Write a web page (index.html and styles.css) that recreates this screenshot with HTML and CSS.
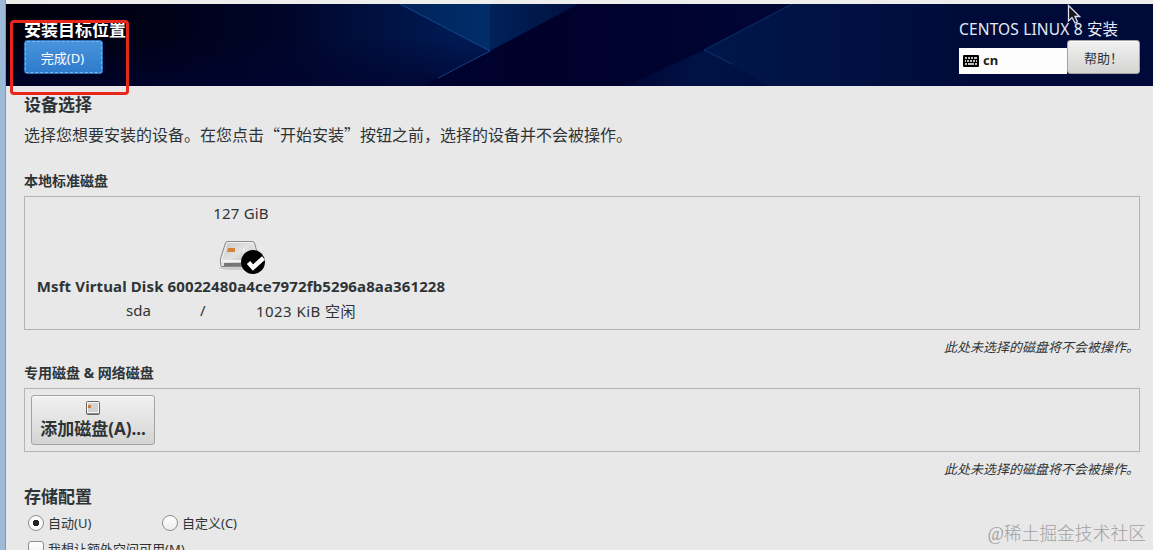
FILE: index.html
```html
<!DOCTYPE html>
<html lang="zh-CN">
<head>
    <meta charset="UTF-8">
    <meta name="viewport" content="width=device-width, initial-scale=1.0">
    <title>安装目标位置</title>
    <link rel="stylesheet" href="styles.css">
</head>
<body>
    <div class="window">
        <header>
            <svg class="banner" viewBox="0 0 1147 82" preserveAspectRatio="none">
                <defs>
                    <linearGradient id="base">
                        <stop offset="0" stop-color="#00000a"/>
                        <stop offset="0.13" stop-color="#000017"/>
                        <stop offset="0.25" stop-color="#00062b"/>
                        <stop offset="0.4" stop-color="#001b56"/>
                        <stop offset="0.48" stop-color="#00164a"/>
                        <stop offset="0.56" stop-color="#00042a"/>
                        <stop offset="1" stop-color="#000a38"/>
                    </linearGradient>
                    <linearGradient id="shade" x2="0" y2="1">
                        <stop offset="0.4" stop-color="#00042f" stop-opacity="0"/>
                        <stop offset="1" stop-color="#00042f" stop-opacity="0.8"/>
                    </linearGradient>
                    <linearGradient id="wedge">
                        <stop offset="0" stop-color="#002358"/>
                        <stop offset="1" stop-color="#002d6b"/>
                    </linearGradient>
                    <linearGradient id="wedgeRight">
                        <stop offset="0" stop-color="#002258"/>
                        <stop offset="1" stop-color="#00103f"/>
                    </linearGradient>
                    <linearGradient id="dark">
                        <stop offset="0" stop-color="#000330"/>
                        <stop offset="0.3" stop-color="#00002a"/>
                        <stop offset="1" stop-color="#000635"/>
                    </linearGradient>
                    <linearGradient id="glow">
                        <stop offset="0" stop-color="#00164a"/>
                        <stop offset="0.35" stop-color="#001041"/>
                        <stop offset="0.6" stop-color="#000a38"/>
                        <stop offset="1" stop-color="#000a38"/>
                    </linearGradient>
                    <linearGradient id="glowLow">
                        <stop offset="0" stop-color="#000533"/>
                        <stop offset="0.5" stop-color="#001245"/>
                        <stop offset="1" stop-color="#000e40"/>
                    </linearGradient>
                </defs>
                <rect width="1147" height="82" fill="url(#base)"/>
                <rect width="484" height="82" fill="url(#shade)"/>
                <path d="M394 0H484V47z" fill="url(#wedge)"/>
                <path d="M484 0H572L484 47z" fill="url(#wedgeRight)"/>
                <path d="M572 0H786L698 46L620 82H415L484 47z" fill="url(#dark)"/>
                <path d="M786 0H1147V82H762L698 46z" fill="url(#glow)"/>
                <path d="M698 46L762 82H620z" fill="url(#glowLow)"/>
                <path d="M394 0L484 47L432 74" fill="none" stroke="#1855a0" stroke-width="1" opacity="0.75"/>
                <path d="M786 0L698 46L726 60" fill="none" stroke="#1552a0" stroke-width="1" opacity="0.5"/>
            </svg>
            <div class="header-left">
                <h1>安装目标位置</h1>
                <button class="btn btn-done">完成(D)</button>
            </div>
            <div class="header-right">
                <div class="product">CENTOS LINUX 8 安装</div>
                <div class="header-tools">
                    <div class="layout-indicator">
                        <svg width="16" height="12" viewBox="0 0 16 12">
                            <rect width="16" height="12" rx="1" fill="#000"/>
                            <path d="M2 3h2M5 3h2M8 3h2M11 3h3M2 6h1M4 6h2M7 6h2M10 6h2M13 6h1M2 9h2M5 9h6M12 9h2" stroke="#fff" stroke-width="1.6"/>
                        </svg>
                        <span>cn</span>
                    </div>
                    <button class="btn btn-help">帮助！</button>
                </div>
            </div>
        </header>

        <main>
            <h2>设备选择</h2>
            <p class="description">选择您想要安装的设备。在您点击“开始安装”按钮之前，选择的设备并不会被操作。</p>

            <h3 class="local">本地标准磁盘</h3>
            <div class="disk-box">
                <div class="disk">
                    <span class="disk-size">127 GiB</span>
                    <svg class="disk-icon" width="50" height="40" viewBox="0 0 50 40">
                        <defs>
                            <linearGradient id="metal" x2="1" y2="1">
                                <stop offset="0" stop-color="#c4c4c4"/>
                                <stop offset="0.45" stop-color="#e2e2e2"/>
                                <stop offset="1" stop-color="#aaa"/>
                            </linearGradient>
                        </defs>
                        <ellipse cx="23" cy="31" rx="20" ry="2" fill="#bbb" opacity="0.6"/>
                        <path d="M11 4.500H36Q38 4.500 38.500 6L43 22V28Q43 29.500 41 29.500H6Q4.500 29.500 4.500 27.500V21.500L9.500 6Q10 4.500 11 4.500z" fill="url(#metal)" stroke="#8a8a8a"/>
                        <path d="M11 5.500H36.500L42 23.500H5.500z" fill="none" stroke="#f2f2f2"/>
                        <path d="M5 24.500H42" stroke="#f4f4f4" stroke-width="1"/>
                        <path d="M8 27.500H40" stroke="#777" stroke-width="3"/>
                        <path d="M12 11h7v4h-8z" fill="#d58337"/>
                        <path d="M28 11v8M31 13v8" stroke="#f5f5f5"/>
                        <circle cx="37" cy="25" r="12" fill="#000"/>
                        <path d="M32.500 25.500L37 30.500L47.500 21" fill="none" stroke="#fff" stroke-width="4.500"/>
                    </svg>
                    <strong class="disk-name">Msft Virtual Disk 60022480a4ce7972fb5296a8aa361228</strong>
                    <div class="disk-info">
                        <span>sda</span>
                        <span>/</span>
                        <span class="disk-free">1023 KiB 空闲</span>
                    </div>
                </div>
            </div>
            <p class="note">此处未选择的磁盘将不会被操作。</p>

            <h3>专用磁盘 &amp; 网络磁盘</h3>
            <div class="network-box">
                <button class="btn btn-add">
                    <svg width="14" height="14" viewBox="0 0 14 14">
                        <rect x="0.500" y="0.500" width="13" height="13" rx="1" fill="#f8f8f8" stroke="#666"/>
                        <rect x="2" y="2" width="10" height="9" fill="#d2d2d2"/>
                        <rect x="2" y="4" width="3" height="3" fill="#cf7c38"/>
                        <path d="M1 12.500h12" stroke="#888"/>
                    </svg>
                    <span>添加磁盘(A)...</span>
                </button>
            </div>
            <p class="note">此处未选择的磁盘将不会被操作。</p>

            <h2 class="storage">存储配置</h2>
            <div class="options">
                <label><span class="radio checked"></span>自动(U)</label>
                <label><span class="radio"></span>自定义(C)</label>
            </div>
            <label class="reclaim"><span class="checkbox"></span>我想让额外空间可用(M)</label>
        </main>
    </div>

    <div class="highlight"></div>
    <svg class="cursor" width="14" height="21" viewBox="0 0 14 21">
        <path d="M1.500 1.500V17L5 13.500L8 19L10.500 18L8 12.500H12.500z" fill="#15151c" stroke="#dde" stroke-width="1.3"/>
    </svg>
    <div class="watermark">@稀土掘金技术社区</div>
</body>
</html>
```
FILE: styles.css
```css
* {
    box-sizing: border-box;
}
body {
    margin: 0;
    height: 550px;
    padding: 4px 0 0 6px;
    overflow: hidden;
    position: relative;
    background: linear-gradient(to right, #9dbbd8 5px, #8798a8 5px, #8798a8 6px, #eeeeec 6px);
    font-family: "Noto Sans", "Noto Sans CJK SC", sans-serif;
    color: #2e3436;
}
h1, h2, h3, p {
    margin: 0;
}
.window {
    height: 546px;
    overflow: hidden;
    background: #e8e8e8;
}
header {
    position: relative;
    height: 82px;
    padding: 15px 13px 0 18px;
    display: flex;
    justify-content: space-between;
    color: white;
}
.banner {
    position: absolute;
    top: 0;
    left: 0;
    width: 100%;
    height: 100%;
}
.header-left, .header-right {
    position: relative;
}
h1 {
    font-size: 17px;
    line-height: 21px;
}
.btn {
    display: block;
    border: 1px solid #a3a3a0;
    border-radius: 3px;
    padding: 0;
    font-family: inherit;
    font-size: 13px;
    color: #2e3436;
    background: linear-gradient(to bottom, #f1f1f1, #d4d5d3);
    box-shadow: inset 0 1px #fafafa;
}
.btn-done {
    width: 79px;
    height: 34px;
    padding-right: 2px;
    color: white;
    border-color: #2873bd;
    background: linear-gradient(to bottom, #4a94dc, #2d7bcb);
    box-shadow: none;
    outline: 1px dashed #83b5e6;
    outline-offset: -2px;
}
.header-right {
    width: 181px;
}
.product {
    height: 21px;
    font-size: 15.5px;
    letter-spacing: 0.15px;
    line-height: 21px;
    white-space: nowrap;
    color: #e4eaf6;
}
.header-tools {
    display: flex;
}
.layout-indicator {
    width: 108px;
    height: 26px;
    margin-top: 8px;
    padding: 0 0 1px 4px;
    display: flex;
    align-items: center;
    gap: 4px;
    background: #fdfdfd;
    color: #1c1c1c;
    font-size: 13px;
    font-weight: bold;
}
.layout-indicator span {
    line-height: 18px;
    padding-bottom: 2px;
}
.btn-help {
    width: 73px;
    height: 34px;
}
main {
    padding: 8px 13px 0 18px;
}
h2 {
    font-size: 17px;
    line-height: 22px;
}
.description {
    margin-top: 7px;
    font-size: 16px;
    line-height: 22px;
    font-family: "Noto Sans CJK SC", sans-serif;
}
h3 {
    font-size: 14px;
    line-height: 20px;
}
.local {
    margin-top: 26px;
}
.disk-box {
    height: 134px;
    margin-top: 5px;
    padding: 5px 12px;
    border: 1px solid #b4b4b4;
    font-size: 15px;
}
.disk {
    width: 408px;
    display: flex;
    flex-direction: column;
    align-items: center;
}
.disk-size {
    letter-spacing: 0.2px;
    line-height: 22px;
}
.disk-icon {
    margin-top: 13px;
}
.disk-name {
    margin-top: -2px;
    letter-spacing: 0.12px;
    line-height: 22px;
    white-space: nowrap;
}
.disk-info {
    width: 100%;
    padding-left: 89px;
    display: grid;
    grid-template-columns: 74px 56px 1fr;
    line-height: 22px;
    margin-top: 2px;
}
.disk-free {
    padding-top: 1px;
    letter-spacing: 0.45px;
    white-space: nowrap;
}
.note {
    padding-right: 1px;
    margin-top: 7px;
    text-align: right;
    font-size: 13px;
    font-style: italic;
    line-height: 20px;
}
.note + h3 {
    margin-top: 6px;
}
.network-box {
    height: 64px;
    margin-top: 5px;
    padding: 6px;
    border: 1px solid #b4b4b4;
}
.btn-add {
    width: 124px;
    height: 50px;
    display: flex;
    flex-direction: column;
    align-items: center;
    gap: 1px;
    padding-top: 5px;
    font-size: 17px;
    font-weight: bold;
    line-height: 26px;
    white-space: nowrap;
}
.storage {
    margin-top: 7px;
}
.options {
    display: grid;
    grid-template-columns: 134px 134px;
    margin-top: 5px;
    padding-left: 4px;
}
label {
    display: flex;
    align-items: center;
    gap: 4px;
    font-size: 13px;
    line-height: 20px;
}
.radio, .checkbox {
    width: 16px;
    height: 16px;
    border: 1px solid #8e8e8e;
    background: linear-gradient(to bottom, #fff, #eee);
}
.radio {
    border-radius: 50%;
}
.radio.checked {
    background: radial-gradient(circle, #222 0 3px, #f8f8f8 3.5px);
}
.checkbox {
    border-radius: 3px;
}
.reclaim {
    margin-top: 6px;
    padding-left: 4px;
}
.highlight {
    position: absolute;
    top: 20px;
    left: 10px;
    width: 119px;
    height: 75px;
    border: 3px solid #e8261c;
    border-radius: 4px;
}
.cursor {
    position: absolute;
    top: 4px;
    left: 1067px;
}
.watermark {
    position: absolute;
    right: 7px;
    bottom: 3px;
    font-family: "Liberation Serif", "Noto Sans CJK SC", serif;
    font-size: 17.8px;
    font-weight: 300;
    line-height: 26px;
    color: #a0a0a0;
}
```
